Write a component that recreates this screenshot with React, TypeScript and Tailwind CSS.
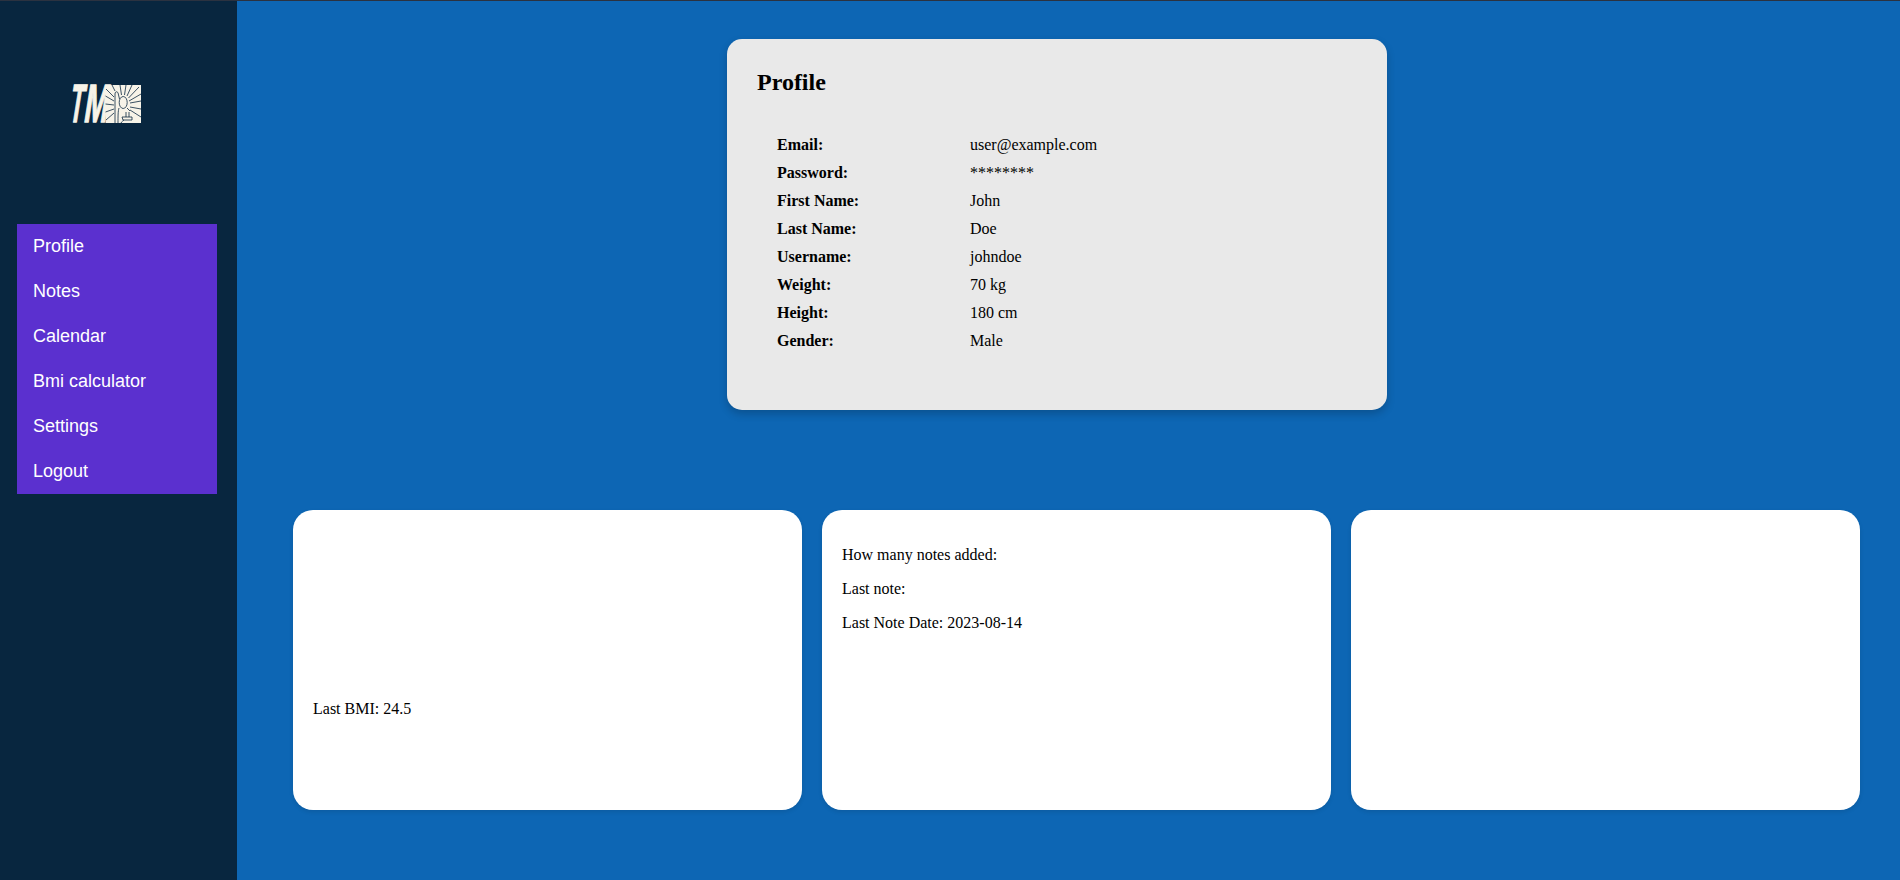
const NAV = ["Profile", "Notes", "Calendar", "Bmi calculator", "Settings", "Logout"];

const FIELDS: [string, string][] = [
  ["Email:", "user@example.com"],
  ["Password:", "********"],
  ["First Name:", "John"],
  ["Last Name:", "Doe"],
  ["Username:", "johndoe"],
  ["Weight:", "70 kg"],
  ["Height:", "180 cm"],
  ["Gender:", "Male"],
];

function Logo() {
  return (
    <svg className="ml-[50px] mt-[61px] h-[84px] w-[116px] shrink-0 overflow-visible" viewBox="-20 -20 116 84">
      <g
        className="font-['Liberation_Sans',sans-serif] text-[54px] font-bold"
        fill="#f7f3e8"
        stroke="#f7f3e8"
        strokeWidth="1.4"
      >
        <text transform="translate(-2 40) skewX(-9) scale(0.42 1)">T</text>
        <text transform="translate(12.8 40) skewX(-9) scale(0.53 1)">M</text>
      </g>
      <rect x="35.5" y="3" width="35.5" height="38" fill="#f7f3e8" />
      <g fill="none" stroke="#0a2740" strokeWidth="0.8">
        <path d="M45 41V12C45 9 48 9 48.3 12L49.5 17M49 26C48 29 48 34 48 41" />
        <path d="M50 3L51.5 13M56 3L54.5 13M62 3L57 14M69 5L58.5 16M71 12L59 19M71 19L60 21M71 27L60 25M71 35L60 28M42 3L45 9M36 7L44 15M35.5 14L44 19M35.5 22L44 23M35.5 30L44 27M36 38L44 31" />
        <ellipse cx="53.2" cy="20.5" rx="4" ry="6" />
        <path d="M57 26L60 29M56 30V35M59 30V35M52 35H62V38H53ZM51 41C52 39 53 39 54 38" />
      </g>
    </svg>
  );
}

export default function App() {
  return (
    <div className="flex h-[880px] w-full flex-col overflow-hidden bg-[#0d66b4] font-['Liberation_Serif',serif] text-base text-black">
      <div className="h-px shrink-0 bg-[#2b3240]" />
      <div className="flex min-h-0 flex-1">
        <aside className="flex w-[237px] shrink-0 flex-col bg-[#08263f]">
          <Logo />
          <nav className="ml-[17px] mt-[78px] w-[200px] bg-[#5b30cf] font-['Liberation_Sans',sans-serif] text-lg text-white">
            {NAV.map((item) => (
              <a key={item} className="flex h-[45px] items-center px-4 pb-0.5">
                {item}
              </a>
            ))}
          </nav>
        </aside>
        <main className="flex flex-1 flex-col">
          <section className="ml-[490px] mt-[38px] h-[371px] w-[660px] rounded-[15px] bg-[#e9e9e9] px-[30px] pt-[27px] shadow-[0_4px_8px_rgba(0,0,0,0.2)]">
            <h2 className="text-2xl leading-8 font-bold">Profile</h2>
            <dl className="mt-[33px] px-5">
              {FIELDS.map(([label, value]) => (
                <div key={label} className="flex h-7 items-center">
                  <dt className="w-[193px] font-bold">{label}</dt>
                  <dd>{value}</dd>
                </div>
              ))}
            </dl>
          </section>
          <div className="ml-14 mr-10 mt-[100px] grid grid-cols-3 gap-5">
            <section className="h-[300px] rounded-[20px] bg-white px-5 pt-[187px] shadow-[0_2px_4px_rgba(0,0,0,0.1)]">
              <p>Last BMI: 24.5</p>
            </section>
            <section className="flex h-[300px] flex-col gap-[10px] rounded-[20px] bg-white px-5 pt-[33px] shadow-[0_2px_4px_rgba(0,0,0,0.1)]">
              <p>How many notes added:</p>
              <p>Last note:</p>
              <p>Last Note Date: 2023-08-14</p>
            </section>
            <section className="h-[300px] rounded-[20px] bg-white shadow-[0_2px_4px_rgba(0,0,0,0.1)]" />
          </div>
        </main>
      </div>
    </div>
  );
}
